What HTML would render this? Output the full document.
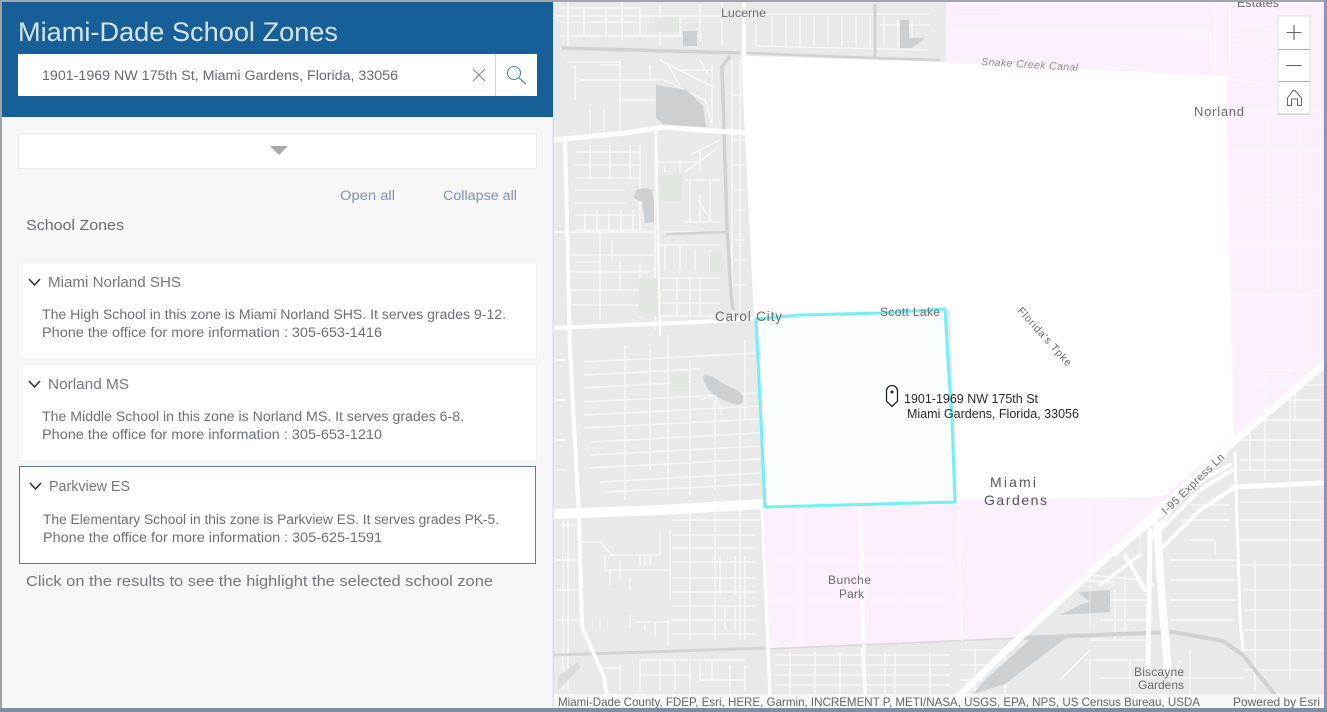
<!DOCTYPE html>
<html lang="en"><head><meta charset="utf-8"><title>Miami-Dade School Zones</title>
<style>
html,body{margin:0;padding:0;background:#fff;width:1327px;height:712px;overflow:hidden}
svg{display:block;position:absolute;left:0;top:0}
text{font-family:"Liberation Sans",Arial,sans-serif}
.p{font-size:13.5px;fill:#6c7074}
.h{font-size:14.5px;fill:#74787c}
.m{fill:#6a6c6f}
</style></head><body>
<svg width="1327" height="712" viewBox="0 0 1327 712" xmlns="http://www.w3.org/2000/svg">
<!-- map base -->
<rect x="553" y="0" width="774" height="712" fill="#e9e9e9"/>
<!-- pink zones -->
<polygon points="946,0 1323,0 1323,365 1233,440 1153,510 1020,638 770,650 764,505 958,500 946,62" fill="#fcf0fc"/>
<!-- gray streets grid -->
<g fill="none" stroke="#f8f8f8" stroke-width="1.4">
<path d="M556,16H720M560,8H640M560,22H640M560,36H700M622,2V40M660,5V45M700,4V42M722,2V45M568,2V48M584,10V36M606,10V36M640,8V36M680,18V36"/>
<path d="M750,14H930M756,14V46M772,16V46M786,16V46M800,16V46M814,16V46M828,16V46M842,16V46M856,16V46M870,16V46M884,16V46M898,20V46M912,20V48M756,46L928,50M880,25H930M950,12H1000"/>
<path d="M567,62H620V80M575,65V100M600,65H620V130M580,80H660M620,100H655M590,110V130M604,110V130M650,65V80M660,60L715,88M668,65L680,85M700,60L708,75M680,70H712M660,78L705,100L712,125M712,65V125M722,70V125"/>
<path d="M575,152H640M575,165H640M575,178H640M575,190H625M575,203H625M575,215H635M575,230H640M640,145V230M590,145V178M610,145V178M630,145V178M585,210V230M597,210V230M609,210V230M621,210V230M633,210V230M655,135V330M655,162H700M665,165V172M680,160V172M690,155L720,140M700,150V172M685,172L715,150M685,180H720M685,222H720M690,180V222M710,180V222M698,200L712,222M700,195V222M554,232H730"/>
<path d="M570,255H655M570,272H650M570,290H640M570,305H640M600,232V320M612,240V262M575,262H600M620,262V290M640,262V318M655,245H720M665,245V270M680,245V270M695,250V270M710,250V272M655,278H720M660,290H720M660,303H720M660,316H720M677,278V316M690,278V316M700,278V316M732,60V320M740,60V320M732,95H745M735,140H745M735,165H745M735,190H745M735,210H745M735,240H745M735,260H745M735,285H745"/>
<path d="M584,362L760,353M584,375L700,369M584,388L690,382M584,402L760,393M584,415L760,406M584,428L760,419M590,442L760,433M590,455L760,446M590,468L760,459M600,482L760,473M605,492L760,484M625,345V500M650,350V470M668,335V495M690,360V495M715,400V490M740,400V505M745,340V420M700,400L715,395L722,415"/>
<path d="M556,400H566M556,440H566M556,470H566M556,360H566"/>
<path d="M560,525H576M563,520V690M568,520V690M556,560H578M556,590H578M556,620H578M582,542H600L612,555H660V530M605,555V570H670M670,530V600M640,555V565M645,555V565M650,555V565M630,578V590M610,570V585M620,560V580"/>
<path d="M672,520H760M672,535H755M672,548H755M672,562H755M672,578H755M672,592H755M672,606H755M672,620H755M672,634H755M690,500V640M715,500V640M740,500V640M720,556V595M735,556V595M745,556V640M725,605V630M735,605V630"/>
<path d="M636,622H670M645,625V630M655,622V635M668,620V645M630,615V628M600,620V628"/>
<path d="M640,660V690M620,665V690M640,660H745M640,675H690M660,662V690M675,662V690M690,662V690M700,660V680M712,660V680M730,665V690M745,665V690M700,680H745M600,668H620"/>
<path d="M775,655H950M775,665H950M775,675H950M775,685H950M790,652V694M815,652V694M840,652V694M865,652V694M885,652V694M895,652V694M930,652V694M960,650H1015M960,665H1015M960,680H1000M975,650V694M1005,650V694"/>
<path d="M1090,640H1150M1085,660H1150M1090,650L1060,680M1090,660V694M1130,660V690M1190,650V694M1180,660L1170,690M1175,678H1243M1100,678H1150"/>
<path d="M1240,470H1323M1240,502H1323M1240,520H1323M1240,540H1323M1240,565H1323M1170,560H1235M1170,580H1235M1170,600H1235M1170,620H1235M1255,560V690M1290,470V680M1245,590H1323M1245,610H1323M1245,630H1323M1245,650H1323M1245,670H1323M1190,505H1230M1180,520H1230M1260,370H1323M1260,385H1323M1260,400H1323M1260,420H1323M1240,440H1323M1240,460H1323M1265,380V480M1290,370V480M1250,430V470M1295,380V420M1190,540H1215V555"/>
<path d="M1090,575L1140,580M1070,580L1115,582M1115,590V640M1125,590V640M1100,620H1150M1110,600H1150M1125,575V640"/>
</g>
<!-- canals -->
<g fill="none" stroke="#cfd1d2" stroke-linejoin="round">
<path d="M562,48L740,53" stroke-width="3.5"/>
<path d="M747,53L875,58L940,60" stroke-width="2.5"/>
<path d="M875,4L875,58" stroke-width="3"/>
<path d="M730,56L722,67L727,227L731,295L733,310" stroke-width="3.5"/>
<path d="M666,234L726,232" stroke-width="2.5"/>
<path d="M554,655L768,648" stroke-width="3" stroke="#d3d5d5"/>
<path d="M768,649L1020,638" stroke-width="1.5" stroke="#d8d5d8"/>
<path d="M1020,638L1173,632L1223,641L1243,655L1275,695" stroke-width="4"/>
</g>
<!-- water -->
<g fill="#cdd0d2">
<path d="M656,85L687,90L703,106L706,127L664,125L656,118Z"/>
<path d="M636,190L645,188L652,190L654,200L654,222L645,223L642,202L634,198Z"/>
<path d="M703,376C712,372 722,385 733,388C745,392 746,404 738,405C725,402 705,395 703,376Z"/>
<path d="M900,20H909V38H925L912,48H900Z"/>
<rect x="683" y="31" width="14" height="15"/>
<path d="M1078,592L1110,590V612L1060,615L1082,604L1090,602Z"/>
<path d="M1033,637L1067,637L1005,684L973,694L985,680Z"/>
<path d="M558,676L578,662L580,668L558,690Z" fill="#dadcdc"/>
</g>
<!-- green spots -->
<g fill="#e3e7e1">
<rect x="660" y="175" width="22" height="26"/>
<rect x="639" y="278" width="23" height="38"/>
<rect x="655" y="18" width="24" height="14"/>
<rect x="671" y="372" width="17" height="19"/>
<rect x="710" y="252" width="12" height="20"/>
</g>
<!-- white area -->
<polygon points="741,55 752,56 945,62 1225,76 1233,437 1165,495 1147,497 957,500 950,310 758,318 754,318" fill="#fff"/>
<!-- major roads -->
<g fill="none" stroke="#fff" stroke-linejoin="round" stroke-linecap="round">
<path d="M554,140L625,133L664,127L700,130L747,133" stroke-width="5"/>
<path d="M554,328L700,322L756,319" stroke-width="4"/>
<path d="M554,514L660,510L764,504" stroke-width="10"/>
<path d="M744,0V55" stroke-width="4"/>
<path d="M565,140L570,350L579,517L582,627L604,677L607,696" stroke-width="4"/>
<path d="M656,130L660,335" stroke-width="2"/>
<path d="M762,505L770,694" stroke-width="3.5"/>
<path d="M860,507L864,650M863,650L865,694" stroke-width="4" stroke-opacity=".75"/>
<path d="M958,500L962,640" stroke-width="2.5" stroke-opacity=".6"/>
<path d="M1225,70L1233,440" stroke-width="3" stroke-opacity=".5"/>
<path d="M1327,362L1230,445L1153,515L1017,640L955,700" stroke-width="7"/>
<path d="M1150,530L1148,670" stroke-width="5"/>
<path d="M1157,525L1162,600L1168,670" stroke-width="8"/>
<path d="M1125,555L1145,590L1152,585M1115,555L1125,545L1205,478L1230,465" stroke-width="4"/>
<path d="M1150,540L1185,490L1225,455M1160,530L1200,490L1232,470M1160,550L1200,510L1235,487" stroke-width="4"/>
<path d="M1233,487L1323,483" stroke-width="5"/>
<path d="M1235,453L1240,617L1243,650" stroke-width="3"/>
<path d="M1100,585L1140,555" stroke-width="3"/>
</g>
<!-- pink streets -->
<g fill="none" stroke="#fff" stroke-opacity=".4">
<path d="M1215,0V74M1230,0V70M950,30H1210M1178,35H1210V72M1240,25H1290M1235,40H1300M1255,55L1285,62M1225,78L1270,85L1323,130M1228,110H1320M1230,295H1320M1230,150H1320M1230,200H1320M1230,245H1320M1268,120V290M1300,120V290" stroke-width="2"/>
<path d="M1028,510V635M1090,505V630M1140,505V560M800,510V645M900,510V645M770,560H950M770,600H950" stroke-width="1"/>
</g>
<!-- selected zone -->
<polygon points="756,319 800,315 880,313 945,309 948,360 952,420 955,502 880,504 765,507 761,420" fill="#fbfefe" stroke="#72f0f3" stroke-width="3" stroke-linejoin="round"/>
<!-- map labels -->
<g class="m">
<text x="721" y="17" font-size="12" textLength="45" lengthAdjust="spacingAndGlyphs">Lucerne</text>
<text x="1237" y="7" font-size="12" textLength="42" lengthAdjust="spacingAndGlyphs">Estates</text>
<text x="715" y="321" font-size="13.5" textLength="67" lengthAdjust="spacing">Carol City</text>
<text x="880" y="316" font-size="12" textLength="60" lengthAdjust="spacing">Scott Lake</text>
<text x="1194" y="116" font-size="13" textLength="50" lengthAdjust="spacing">Norland</text>
<text transform="translate(981,65) rotate(3.5)" font-size="10.5" font-style="italic" fill="#8d8d95" textLength="97" lengthAdjust="spacing">Snake Creek Canal</text>
<text transform="translate(1017,311) rotate(48)" font-size="10.5" textLength="75" lengthAdjust="spacing">Florida's Tpke</text>
<text x="990" y="487" font-size="14" fill="#55575a" textLength="46" lengthAdjust="spacing">Miami</text>
<text x="984" y="505" font-size="14" fill="#55575a" textLength="63" lengthAdjust="spacing">Gardens</text>
<text x="828" y="584" font-size="12" textLength="43" lengthAdjust="spacing">Bunche</text>
<text x="839" y="598" font-size="12" textLength="25" lengthAdjust="spacing">Park</text>
<text x="1134" y="676" font-size="12" textLength="50" lengthAdjust="spacing">Biscayne</text>
<text x="1138" y="689" font-size="12" textLength="46" lengthAdjust="spacing">Gardens</text>
<text transform="translate(1166,515) rotate(-44)" font-size="11" textLength="82" lengthAdjust="spacing">I-95 Express Ln</text>
</g>
<!-- address graphic -->
<path d="M886.500,391a5.500,5.500 0 0 1 11,0v10l-5.500,5.500l-5.500,-5.500z" fill="#fff" stroke="#222" stroke-width="1.300" stroke-linejoin="round"/>
<circle cx="892" cy="392" r="1.500" fill="#222"/>
<text x="904" y="403" font-size="13" fill="#2a2a2a" textLength="134" lengthAdjust="spacingAndGlyphs">1901-1969 NW 175th St</text>
<text x="907" y="418" font-size="13" fill="#2a2a2a" textLength="172" lengthAdjust="spacingAndGlyphs">Miami Gardens, Florida, 33056</text>
<!-- map controls -->
<rect x="1278" y="16" width="32" height="98" fill="#fff" stroke="#e2e2e2" stroke-width="1"/>
<rect x="1278" y="113.500" width="32" height="1.500" fill="#cfcfcf"/>
<path d="M1278,49.500H1310M1278,81.500H1310" stroke="#b0b0b0" stroke-width="1"/>
<path d="M1294,25V40M1286.500,32.500H1301.500M1286.500,65.500H1301.500" stroke="#666" stroke-width="1.100" fill="none"/>
<path d="M1287.500,105.500V98L1293,90.500H1295L1301.500,98V105.500H1297.500V99H1291.500V105.500Z" stroke="#666" stroke-width="1" fill="none" stroke-linejoin="round"/>
<!-- attribution -->
<rect x="553" y="694" width="771" height="14" fill="#fff" fill-opacity=".65"/>
<text x="558" y="706" font-size="12" fill="#666" textLength="642" lengthAdjust="spacingAndGlyphs">Miami-Dade County, FDEP, Esri, HERE, Garmin, INCREMENT P, METI/NASA, USGS, EPA, NPS, US Census Bureau, USDA</text>
<text x="1233" y="706" font-size="12" fill="#666" textLength="87" lengthAdjust="spacingAndGlyphs">Powered by Esri</text>
<!-- panel -->
<rect x="0" y="0" width="553" height="712" fill="#f7f7f8"/>
<rect x="552.500" y="117" width="1" height="595" fill="#d0d8ea"/>
<rect x="2" y="2" width="551" height="115" fill="#175f98"/>
<text x="18" y="41" font-size="27" fill="#d8e5f1" textLength="320" lengthAdjust="spacingAndGlyphs">Miami-Dade School Zones</text>
<rect x="18" y="54" width="519" height="42" fill="#fff"/>
<rect x="495" y="54" width="1" height="42" fill="#d5d5d5"/>
<text x="42" y="80" font-size="13.500" fill="#666a6e" textLength="356" lengthAdjust="spacingAndGlyphs">1901-1969 NW 175th St, Miami Gardens, Florida, 33056</text>
<path d="M473,69L485,81M485,69L473,81" stroke="#888" stroke-width="1.200" fill="none"/>
<circle cx="514" cy="73" r="6.500" stroke="#4a86b6" stroke-width="1.100" fill="none"/>
<path d="M519,78L526,84" stroke="#4a86b6" stroke-width="1.200" fill="none"/>
<rect x="18.500" y="133.500" width="518" height="35" fill="#fff" stroke="#ebecec"/>
<polygon points="270,146 288,146 279,155" fill="#a9a9a9"/>
<text x="340" y="200" font-size="13.500" fill="#7d92b6" textLength="55" lengthAdjust="spacingAndGlyphs">Open all</text>
<text x="443" y="200" font-size="13.500" fill="#7d92b6" textLength="74" lengthAdjust="spacingAndGlyphs">Collapse all</text>
<text x="26" y="230" font-size="15" fill="#6a6e72" textLength="98" lengthAdjust="spacingAndGlyphs">School Zones</text>
<!-- card 1 -->
<rect x="18.500" y="262.500" width="518" height="96" fill="#fff" stroke="#f0f1f1"/>
<path d="M29,279L34.500,285L40,279" stroke="#333" stroke-width="1.600" fill="none"/>
<text class="h" x="48" y="287" textLength="133" lengthAdjust="spacingAndGlyphs">Miami Norland SHS</text>
<text class="p" x="42" y="319" textLength="464" lengthAdjust="spacingAndGlyphs">The High School in this zone is Miami Norland SHS. It serves grades 9-12.</text>
<text class="p" x="42" y="337" textLength="340" lengthAdjust="spacingAndGlyphs">Phone the office for more information : 305-653-1416</text>
<!-- card 2 -->
<rect x="18.500" y="364.500" width="518" height="96" fill="#fff" stroke="#f0f1f1"/>
<path d="M29,381L34.500,387L40,381" stroke="#333" stroke-width="1.600" fill="none"/>
<text class="h" x="48" y="389" textLength="81" lengthAdjust="spacingAndGlyphs">Norland MS</text>
<text class="p" x="42" y="421" textLength="422" lengthAdjust="spacingAndGlyphs">The Middle School in this zone is Norland MS. It serves grades 6-8.</text>
<text class="p" x="42" y="439" textLength="340" lengthAdjust="spacingAndGlyphs">Phone the office for more information : 305-653-1210</text>
<!-- card 3 -->
<rect x="19.500" y="466.500" width="516" height="97" fill="#fff" stroke="#5a7aa9"/>
<path d="M30,483L35.500,489L41,483" stroke="#333" stroke-width="1.600" fill="none"/>
<text class="h" x="49" y="491" textLength="81" lengthAdjust="spacingAndGlyphs">Parkview ES</text>
<text class="p" x="43" y="524" textLength="456" lengthAdjust="spacingAndGlyphs">The Elementary School in this zone is Parkview ES. It serves grades PK-5.</text>
<text class="p" x="43" y="542" textLength="339" lengthAdjust="spacingAndGlyphs">Phone the office for more information : 305-625-1591</text>
<text x="26" y="586" font-size="15" fill="#73777b" textLength="467" lengthAdjust="spacingAndGlyphs">Click on the results to see the highlight the selected school zone</text>
<!-- frame -->
<rect x="0" y="0" width="1327" height="2" fill="#a2a5ad"/>
<rect x="0" y="0" width="2" height="712" fill="#a0a2a6"/>
<rect x="1324" y="0" width="3" height="712" fill="#8496bb"/>
<rect x="0" y="708" width="1327" height="4" fill="#7e8ea9"/>
</svg>
</body></html>
